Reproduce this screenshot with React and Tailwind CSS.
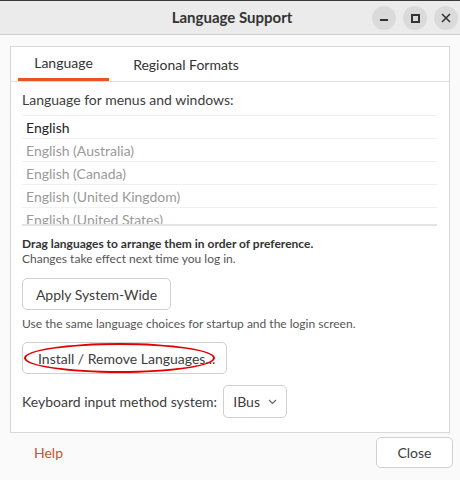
import React from "react";

const langs = [
  "English",
  "English (Australia)",
  "English (Canada)",
  "English (United Kingdom)",
  "English (United States)",
];

function TitleButton({ children }) {
  return (
    <div className="w-[24px] h-[24px] rounded-full bg-[#dadada] flex items-center justify-center">
      {children}
    </div>
  );
}

export default function App() {
  return (
    <div
      className="w-[460px] h-[480px] bg-[#fafafa] flex flex-col overflow-hidden text-[#3d3d3d]"
      style={{ fontFamily: 'Lato, "Noto Sans", sans-serif' }}
    >
      {/* Title bar */}
      <div className="h-[35px] shrink-0 bg-[#ebebeb] border-t border-[#3a3a3a] border-b border-b-[#cfcfcf] flex items-center relative">
        <div className="flex-1 text-center text-[15px] font-bold text-[#333] pl-[4px]">
          Language Support
        </div>
        <div className="absolute right-[2px] top-[5px] flex gap-[7px]">
          <TitleButton>
            <div className="w-[8px] h-[2px] bg-[#333] mt-[4px]" />
          </TitleButton>
          <TitleButton>
            <div className="w-[9px] h-[9px] border-2 border-[#333]" />
          </TitleButton>
          <TitleButton>
            <svg width="10" height="10" viewBox="0 0 10 10">
              <path d="M1 1 L9 9 M9 1 L1 9" stroke="#333" strokeWidth="1.6" />
            </svg>
          </TitleButton>
        </div>
      </div>

      {/* Notebook */}
      <div className="mx-[10px] mt-[11px] h-[387px] border border-[#d8d8d8] bg-white flex flex-col">
        <div className="h-[35px] border-b border-[#dedede] flex pl-[7px] text-[14px]">
          <div className="w-[91px] flex flex-col">
            <div className="flex-1 flex items-center justify-center text-[#333]">Language</div>
            <div className="h-[3px] bg-[#e95420]" />
          </div>
          <div className="w-[154px] flex items-center justify-center text-[#333]">
            Regional Formats
          </div>
        </div>

        <div className="px-[11px] pt-[9px] flex flex-col">
          <div className="text-[14px] leading-[18px] text-[#3d3d3d]">
            Language for menus and windows:
          </div>
          <div className="mt-[6px] h-[111px] overflow-hidden border-t border-[#f0f0f0] border-b-2 border-b-[#e3e3e3] mr-[1px]">
            {langs.map((l, i) => (
              <div
                key={l}
                className={`h-[23px] pl-[4px] flex items-center text-[14px] border-b border-[#f1f1f1] ${
                  i === 0 ? "text-[#222]" : "text-[#9a9a9a]"
                }`}
              >
                {l}
              </div>
            ))}
          </div>

          <div className="mt-[10px] text-[12px] leading-[15px] font-bold text-[#333]">
            Drag languages to arrange them in order of preference.
          </div>
          <div className="text-[12px] leading-[15px] text-[#555]">
            Changes take effect next time you log in.
          </div>

          <div className="mt-[12px] w-[149px] h-[32px] border border-[#d0d0d0] rounded-[5px] flex items-center justify-center text-[14px] text-[#3d3d3d]">
            Apply System-Wide
          </div>
          <div className="mt-[6px] text-[12px] leading-[15px] text-[#555]">
            Use the same language choices for startup and the login screen.
          </div>

          <div className="mt-[11px] w-[205px] h-[32px] border border-[#d0d0d0] rounded-[5px] flex items-center text-[14px] text-[#3d3d3d] relative">
            <span className="pl-[15px] whitespace-nowrap">Install / Remove Languages...</span>
            <div className="absolute left-[1px] top-[0px] w-[191px] h-[30px] rounded-[50%] border-2 border-[#e00000]" />
          </div>

          <div className="mt-[11px] flex items-center gap-[6px]">
            <span className="text-[14px] text-[#3d3d3d]">Keyboard input method system:</span>
            <div className="w-[64px] h-[33px] border border-[#d0d0d0] rounded-[5px] flex items-center justify-center gap-[8px] text-[14px] text-[#3d3d3d]">
              <span>IBus</span>
              <svg width="9" height="6" viewBox="0 0 9 6">
                <path d="M1 1 L4.5 4.5 L8 1" stroke="#666" strokeWidth="1.2" fill="none" />
              </svg>
            </div>
          </div>
        </div>
      </div>

      {/* Footer */}
      <div className="flex items-center justify-between mt-[4px] pl-[34px] pr-[7px]">
        <span className="text-[14px] text-[#c7522a]">Help</span>
        <div className="w-[77px] h-[31px] border border-[#d0d0d0] rounded-[5px] bg-white flex items-center justify-center text-[14px] text-[#3d3d3d]">
          Close
        </div>
      </div>
    </div>
  );
}
